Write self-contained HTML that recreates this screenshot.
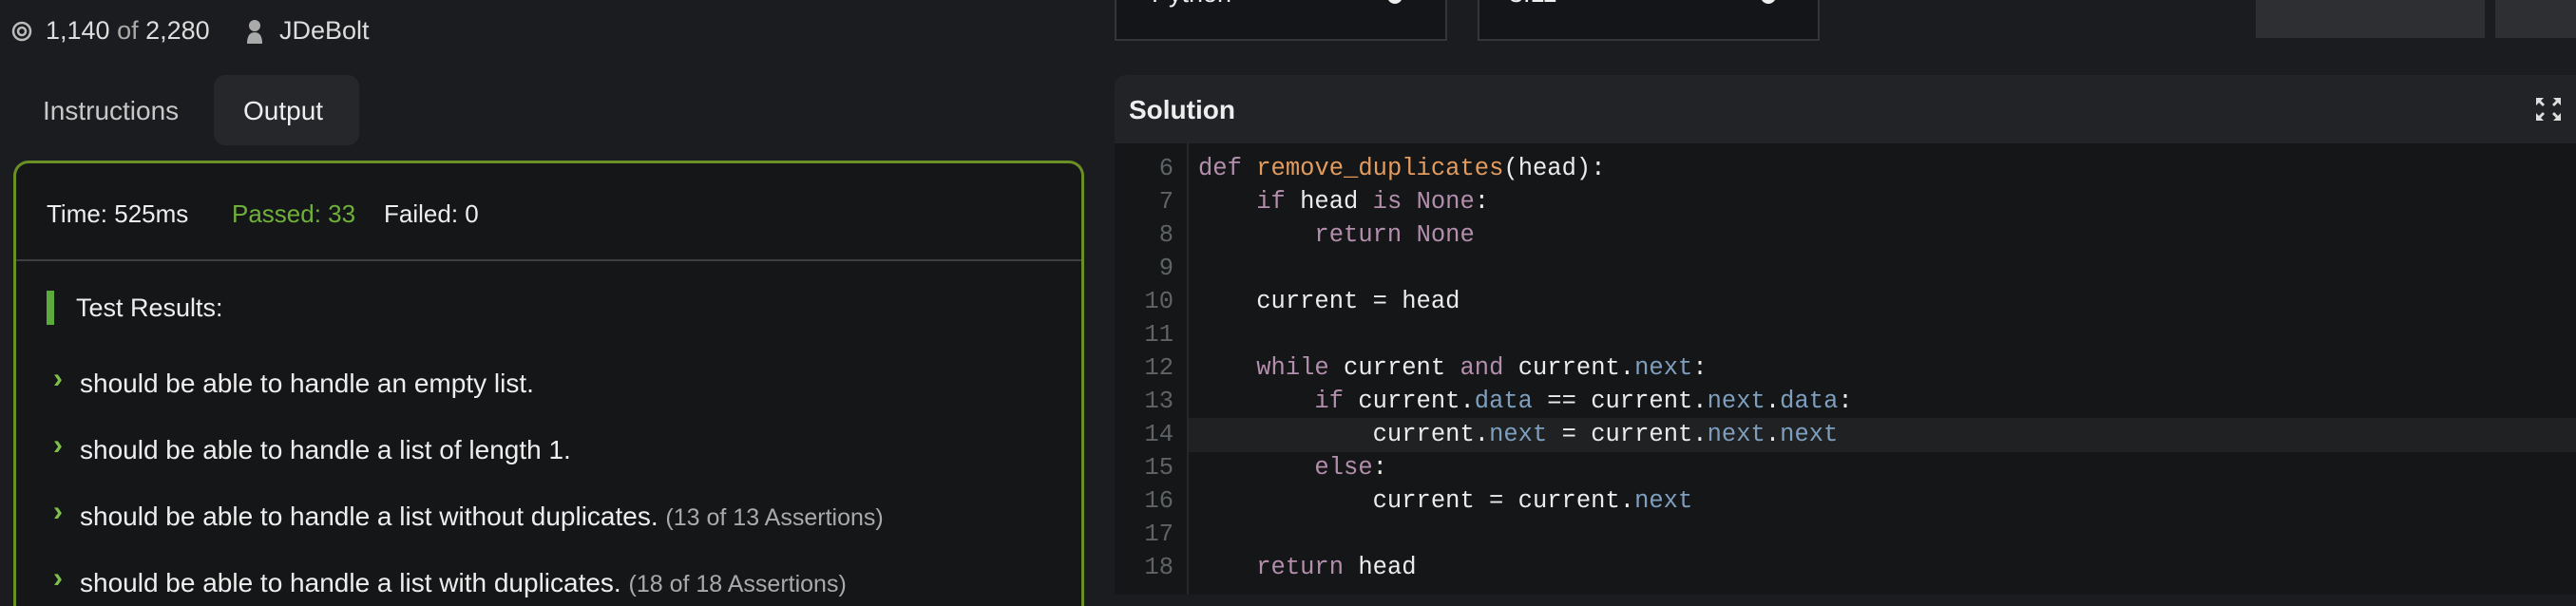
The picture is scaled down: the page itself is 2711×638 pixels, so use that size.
<!DOCTYPE html>
<html><head><meta charset="utf-8"><style>
*{margin:0;padding:0;box-sizing:border-box}
html,body{width:2711px;height:638px;overflow:hidden;background:#1b1c1f}
#w{width:2711px;height:638px;overflow:hidden;position:relative;font-family:"Liberation Sans",sans-serif;color:#e8e8e8}
.a{position:absolute;white-space:nowrap}
.mono{font-family:"Liberation Mono",monospace;font-size:25.5px}
.k{color:#b48ead}.f{color:#e39b5e}.p{color:#7f9fbf}.t{color:#ececec}
.ln{position:absolute;left:1173px;width:62px;text-align:right;color:#5f6366}
.ch{position:absolute;left:56px;font-size:30px;color:#7dc04a;font-weight:bold}
.it{position:absolute;left:84px;font-size:28px;color:#eee;white-space:nowrap}
</style></head><body><div id="w">
<svg class="a" style="left:12px;top:22px" width="22" height="22" viewBox="0 0 22 22"><circle cx="11" cy="11" r="9" fill="none" stroke="#bbb" stroke-width="2.5"/><circle cx="11" cy="11" r="4" fill="none" stroke="#bbb" stroke-width="2.5"/></svg>
<div class="a" style="left:48px;top:17px;font-size:27px;color:#ddd">1,140 <span style="color:#aaa">of</span> 2,280</div>
<svg class="a" style="left:258px;top:20px" width="20" height="26" viewBox="0 0 20 26"><circle cx="10" cy="7" r="6" fill="#aaa"/><path d="M2 26 Q2 14 10 14 Q18 14 18 26Z" fill="#aaa"/></svg>
<div class="a" style="left:294px;top:17px;font-size:27px;color:#ddd">JDeBolt</div>
<div class="a" style="left:45px;top:101px;font-size:28px;color:#c8c8c8">Instructions</div>
<div class="a" style="left:225px;top:79px;width:153px;height:74px;background:#26272b;border-radius:12px"></div>
<div class="a" style="left:256px;top:101px;font-size:28px;color:#eee">Output</div>
<div class="a" style="left:14px;top:169px;width:1127px;height:469px;border:3px solid #6a8f24;border-bottom:none;border-radius:16px 16px 0 0;background:#141617"></div>
<div class="a" style="left:49px;top:210px;font-size:26px;color:#eee">Time: 525ms</div>
<div class="a" style="left:244px;top:210px;font-size:26px;color:#6fb03a">Passed: 33</div>
<div class="a" style="left:404px;top:210px;font-size:26px;color:#eee">Failed: 0</div>
<div class="a" style="left:17px;top:273px;width:1121px;height:2px;background:#3d3f42"></div>
<div class="a" style="left:49px;top:306px;width:8px;height:36px;background:#5aab3c"></div>
<div class="a" style="left:80px;top:309px;font-size:27px;color:#eee">Test Results:</div>
<div class="ch" style="top:382px">›</div><div class="it" style="top:388px">should be able to handle an empty list.</div>
<div class="ch" style="top:452px">›</div><div class="it" style="top:458px">should be able to handle a list of length 1.</div>
<div class="ch" style="top:522px">›</div><div class="it" style="top:528px">should be able to handle a list without duplicates. <span style="font-size:25px;color:#aaa">(13 of 13 Assertions)</span></div>
<div class="ch" style="top:592px">›</div><div class="it" style="top:598px">should be able to handle a list with duplicates. <span style="font-size:25px;color:#aaa">(18 of 18 Assertions)</span></div>
<div class="a" style="left:1173px;top:0;width:350px;height:43px;border:2px solid #34363a;border-top:none;background:#141518;overflow:hidden"><div class="a" style="left:37px;top:-22px;font-size:27px;color:#eee">Python</div><div class="a" style="left:285px;top:-12px;width:16px;height:16px;border-radius:50%;background:#eee"></div></div>
<div class="a" style="left:1555px;top:0;width:360px;height:43px;border:2px solid #34363a;border-top:none;background:#141518;overflow:hidden"><div class="a" style="left:31px;top:-22px;font-size:27px;color:#eee">3.11</div><div class="a" style="left:296px;top:-12px;width:16px;height:16px;border-radius:50%;background:#eee"></div></div>
<div class="a" style="left:2374px;top:0;width:241px;height:40px;background:#2e2f33"></div>
<div class="a" style="left:2626px;top:0;width:85px;height:40px;background:#2e2f33"></div>
<div class="a" style="left:1173px;top:79px;width:1538px;height:72px;background:#222327;border-radius:12px 0 0 0"></div>
<div class="a" style="left:1188px;top:100px;font-size:28px;font-weight:bold;color:#eee">Solution</div>
<svg class="a" style="left:2668px;top:102px" width="28" height="26" viewBox="0 0 28 26" fill="#ddd"><path d="M1 1h8l-3 3 4 4-2 2-4-4-3 3zM27 1h-8l3 3-4 4 2 2 4-4 3 3zM1 25h8l-3-3 4-4-2-2-4 4-3-3zM27 25h-8l3-3-4-4 2-2 4 4 3-3z"/></svg>
<div class="a" style="left:1173px;top:151px;width:1538px;height:475px;background:#141617"></div>
<div class="a" style="left:1249px;top:151px;width:2px;height:475px;background:#26282a"></div>
<div class="a" style="left:1251px;top:440px;width:1460px;height:36px;background:#1f2122"></div>
<div class="mono">
<div class="ln" style="top:163px">6</div><div class="ln" style="top:198px">7</div><div class="ln" style="top:233px">8</div><div class="ln" style="top:268px">9</div><div class="ln" style="top:303px">10</div><div class="ln" style="top:338px">11</div><div class="ln" style="top:373px">12</div><div class="ln" style="top:408px">13</div><div class="ln" style="top:443px">14</div><div class="ln" style="top:478px">15</div><div class="ln" style="top:513px">16</div><div class="ln" style="top:548px">17</div><div class="ln" style="top:583px">18</div>
<div class="a t" style="left:1261px;top:163px;white-space:pre"><span class="k">def</span> <span class="f">remove_duplicates</span>(head):</div>
<div class="a t" style="left:1261px;top:198px;white-space:pre">    <span class="k">if</span> head <span class="k">is</span> <span class="k">None</span>:</div>
<div class="a t" style="left:1261px;top:233px;white-space:pre">        <span class="k">return</span> <span class="k">None</span></div>
<div class="a t" style="left:1261px;top:303px;white-space:pre">    current = head</div>
<div class="a t" style="left:1261px;top:373px;white-space:pre">    <span class="k">while</span> current <span class="k">and</span> current.<span class="p">next</span>:</div>
<div class="a t" style="left:1261px;top:408px;white-space:pre">        <span class="k">if</span> current.<span class="p">data</span> == current.<span class="p">next</span>.<span class="p">data</span>:</div>
<div class="a t" style="left:1261px;top:443px;white-space:pre">            current.<span class="p">next</span> = current.<span class="p">next</span>.<span class="p">next</span></div>
<div class="a t" style="left:1261px;top:478px;white-space:pre">        <span class="k">else</span>:</div>
<div class="a t" style="left:1261px;top:513px;white-space:pre">            current = current.<span class="p">next</span></div>
<div class="a t" style="left:1261px;top:583px;white-space:pre">    <span class="k">return</span> head</div>
</div>
</div></body></html>
